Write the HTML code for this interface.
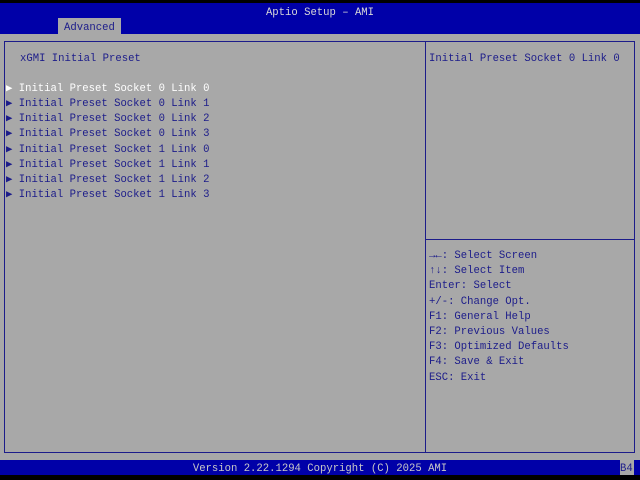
<!DOCTYPE html>
<html><head><style>
*{margin:0;padding:0;box-sizing:border-box}
body{width:640px;height:480px;background:#000;position:relative;overflow:hidden;font-family:"Liberation Mono","DejaVu Sans Mono",monospace;font-size:10.6px;color:#1c1c8a}
.abs{position:absolute;white-space:pre;line-height:15px}
#top{position:absolute;left:0;top:3px;width:640px;height:31px;background:#0000a8}
#main{position:absolute;left:0;top:34px;width:640px;height:426px;background:#a8a8a8}
#bot{position:absolute;left:0;top:460px;width:640px;height:15px;background:#0000a8}
.box{position:absolute;border:1px solid #1c1c8a}
</style></head><body>
<div id="top"></div>
<div class="abs" style="left:0;width:640px;top:6px;text-align:center;color:#d8d8d8">Aptio Setup – AMI</div>
<div style="position:absolute;left:58px;top:18px;width:63px;height:16px;background:#a8a8a8"></div>
<div class="abs" style="left:64px;top:21px;color:#1c1c8a">Advanced</div>
<div id="main"></div>
<div class="box" style="left:4px;top:41px;width:422px;height:412px"></div>
<div class="box" style="left:425px;top:41px;width:210px;height:412px"></div>
<div style="position:absolute;left:426px;top:239px;width:208px;height:1px;background:#1c1c8a"></div>
<div class="abs" style="left:20px;top:52px">xGMI Initial Preset</div>
<div class="abs" style="left:6px;top:82px;color:#fff">▶ Initial Preset Socket 0 Link 0</div>
<div class="abs" style="left:6px;top:97px;line-height:15.2px">▶ Initial Preset Socket 0 Link 1
▶ Initial Preset Socket 0 Link 2
▶ Initial Preset Socket 0 Link 3
▶ Initial Preset Socket 1 Link 0
▶ Initial Preset Socket 1 Link 1
▶ Initial Preset Socket 1 Link 2
▶ Initial Preset Socket 1 Link 3</div>
<div class="abs" style="left:429px;top:52px">Initial Preset Socket 0 Link 0</div>
<div class="abs" style="left:429px;top:249px;line-height:15.2px">→←: Select Screen
↑↓: Select Item
Enter: Select
+/-: Change Opt.
F1: General Help
F2: Previous Values
F3: Optimized Defaults
F4: Save &amp; Exit
ESC: Exit</div>
<div id="bot"></div>
<div class="abs" style="left:0;width:640px;top:462px;text-align:center;color:#c8c8c8">Version 2.22.1294 Copyright (C) 2025 AMI</div>
<div class="abs" style="left:620px;top:460px;width:14px;height:15px;padding-top:2px;background:#a8a8a8;color:#1c1c8a">B4</div>
</body></html>
